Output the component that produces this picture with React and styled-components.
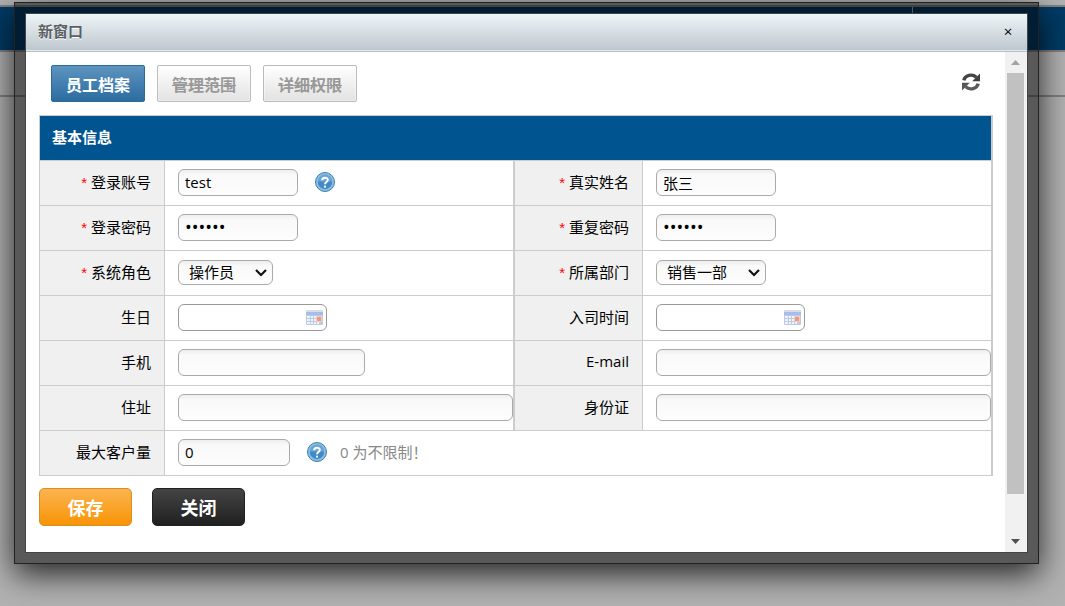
import React from 'react';
import styled, { createGlobalStyle, css } from 'styled-components';

const GlobalStyle = createGlobalStyle`
    * {
        box-sizing: border-box;
    }

    html, body, #root {
        height: 100%;
        margin: 0;
    }

    body {
        overflow: hidden;
        background: #b2b2b2;
        font-family: "Open Sans", "Noto Sans CJK SC", sans-serif;
        font-size: 15px;
        color: #000;
    }

    button, input, select {
        font-family: inherit;
        font-size: inherit;
        color: inherit;
    }
`;

// Page behind the dialog
const Page = styled.div`
    position: relative;
    height: 100%;
`;

const TopLine = styled.div`
    height: 7px;
    border-bottom: 2px solid #818181;
`;

const NavBar = styled.div`
    display: flex;
    justify-content: flex-end;
    height: 45px;
    padding-right: 152px;
    background: #003b66;
    border-bottom: 2px solid #818181;
`;

const NavDivider = styled.div`
    width: 1px;
    background: #b2b2b2;
`;

const SubBar = styled.div`
    height: 45px;
    border-bottom: 2px solid #818181;
`;

// Dialog
const Frame = styled.div`
    position: absolute;
    inset: 2px 26px 42px 14px;
    display: flex;
    padding: 10px;
    border: 1px solid #222;
    background: rgba(0, 0, 0, 0.5);
    box-shadow: 0 10px 30px rgba(0, 0, 0, 0.8);
`;

const Dialog = styled.section`
    display: flex;
    flex-direction: column;
    flex: 1;
    min-width: 0;
    border: 1px solid #444;
    background: #fff;
`;

const TitleBar = styled.header`
    display: flex;
    align-items: center;
    justify-content: space-between;
    height: 38px;
    padding: 0 12px 4px;
    background: linear-gradient(#edf5f8, #bdc6cd);
    border-bottom: 1px solid #b4bec5;
    box-shadow: inset 0 -1px 0 #e2edf1;
`;

const Title = styled.h1`
    margin: 0;
    font-size: 15px;
    font-weight: 700;
    line-height: 20px;
    color: #596164;
    text-shadow: 0 1px 0 #fff;
`;

const CloseButton = styled.button`
    width: 14px;
    padding: 0;
    border: 0;
    background: transparent;
    line-height: 20px;
    color: #000;
`;

const Body = styled.div`
    display: flex;
    flex: 1;
    min-height: 0;
`;

const Content = styled.form`
    flex: 1;
    min-width: 0;
    padding: 13px 12px 0 13px;
`;

const Toolbar = styled.div`
    display: flex;
    align-items: center;
    justify-content: space-between;
    padding: 0 12px;
`;

const Tabs = styled.div`
    display: flex;
    gap: 12px;
`;

const Tab = styled.button`
    height: 37px;
    padding: 0 14px;
    border: 1px solid #bbb;
    border-radius: 2px;
    background: linear-gradient(#fff, #e2e2e2);
    box-shadow: inset 0 0 0 1px rgba(255, 255, 255, 0.4);
    font-size: 16px;
    font-weight: 700;
    color: #999;
    text-decoration: line-through;

    ${(props) => props.$active && css`
        border-color: #2c6a9b;
        background: linear-gradient(#5e94bf, #2b6ca0);
        box-shadow: none;
        color: #fff;
        text-decoration: none;
    `}
`;

const IconButton = styled.button`
    display: flex;
    padding: 0;
    border: 0;
    background: transparent;
`;

const RefreshButton = styled(IconButton)`
    padding-bottom: 4px;
`;

const Table = styled.table`
    width: 100%;
    margin-top: 13px;
    border-collapse: separate;
    border-spacing: 0;
    table-layout: fixed;
    border-top: 1px solid #ccc;
    border-left: 1px solid #ccc;
    border-right: 1px solid #ccc;
`;

const HeadCell = styled.th`
    height: 45px;
    padding: 0 12px 4px;
    border-right: 1px solid #ccc;
    border-bottom: 1px solid #ccc;
    background: #005490;
    text-align: left;
    font-weight: 700;
    color: #fff;
`;

const LabelCell = styled.th`
    height: 45px;
    padding: 0 13px 4px 0;
    border-right: 1px solid #ccc;
    border-bottom: 1px solid #ccc;
    border-left: ${(props) => (props.$second ? '1px solid #ccc' : '0')};
    background: #f0f0f0;
    font-weight: 400;
    text-align: right;
`;

const FieldCell = styled.td`
    height: 45px;
    padding: 0 0 2px 13px;
    border-right: 1px solid #ccc;
    border-bottom: 1px solid #ccc;
`;

const Field = styled.div`
    display: flex;
    align-items: center;
`;

const Star = styled.span`
    margin-right: 4px;
    font-family: "Liberation Sans", sans-serif;
    color: #f00;
`;

const control = css`
    border: 1px solid #aaa;
    border-radius: 6px;
    background: linear-gradient(#eee, #f9f9f9 5px, #fdfdfd);
`;

const Input = styled.input`
    ${control}
    display: block;
    width: ${(props) => props.$width || '100%'};
    height: 27px;
    padding: 0 6px;
    font-size: ${(props) => (props.type === 'password' ? '18px' : '15px')};
`;

const SelectBox = styled.div`
    position: relative;
    width: ${(props) => props.$width};

    svg {
        position: absolute;
        top: 8px;
        right: 5px;
        pointer-events: none;
    }
`;

const Select = styled.select`
    ${control}
    display: block;
    width: 100%;
    height: 25px;
    padding: 0 0 0 10px;
    appearance: none;
`;

const DateBox = styled.div`
    display: flex;
    align-items: center;
    width: 149px;
    height: 27px;
    padding-right: 2px;
    border: 1px solid #999;
    border-radius: 6px;
    background: #fff;
`;

const DateInput = styled.input`
    flex: 1;
    min-width: 0;
    padding: 0 6px;
    border: 0;
    background: transparent;
`;

const HelpButton = styled(IconButton)`
    margin-left: 16px;
`;

const Hint = styled.span`
    margin-left: 12px;
    padding-bottom: 2px;
    color: #888;
`;

const Actions = styled.div`
    display: flex;
    gap: 20px;
    padding-top: 12px;
`;

const Action = styled.button`
    width: 93px;
    height: 38px;
    padding: 0;
    border: 1px solid #222;
    border-radius: 5px;
    background: linear-gradient(#444, #202020);
    font-size: 18px;
    font-weight: 700;
    color: #fff;

    ${(props) => props.$primary && css`
        border-color: #dc8d1f;
        background: linear-gradient(#fbb450, #f89406);
    `}
`;

const Scrollbar = styled.div`
    display: flex;
    flex-direction: column;
    align-items: center;
    width: 22px;
    padding-right: 1px;
    background: #f1f1f1;
`;

const ScrollArrow = styled.button`
    display: flex;
    align-items: center;
    justify-content: center;
    width: 17px;
    height: 21px;
    padding: 0;
    border: 0;
    background: transparent;
`;

const ScrollTrack = styled.div`
    flex: 1;
    width: 17px;
`;

const ScrollThumb = styled.div`
    height: 92%;
    background: #c1c1c1;
`;

function RefreshIcon() {
    return (
        <svg width="20" height="20" viewBox="0 0 20 20">
            <path d="M2.8 8.4C4 3.2 11 1.4 15.4 5.2" fill="none" stroke="#454545" strokeWidth="3.4" />
            <path d="M19 1.6V9.2H11.2Z" fill="#404040" />
            <path d="M17.2 11.6C16 16.8 9 18.6 4.6 14.8" fill="none" stroke="#5a5a5a" strokeWidth="3.4" />
            <path d="M1 18.4V10.8H8.8Z" fill="#555" />
        </svg>
    );
}

function HelpIcon() {
    return (
        <svg width="22" height="22" viewBox="0 0 22 22">
            <circle cx="11" cy="11" r="9.5" fill="#8cc0e4" stroke="#3f7fa8" />
            <circle cx="11" cy="11" r="7.2" fill="#4289c6" />
            <path d="M3.8 10.6a7.2 7.2 0 0 1 14.4 0Z" fill="#69a6d8" />
            <path d="M8.2 9.2C8.2 5.8 13.8 6 13.8 8.9C13.8 11 11 11 11 13.2" fill="none" stroke="#fff" strokeWidth="2" />
            <circle cx="11" cy="15.7" r="1.1" fill="#fff" />
        </svg>
    );
}

function CalendarIcon() {
    return (
        <svg width="19" height="17" viewBox="0 0 19 17">
            <rect x="1" y="1" width="17" height="15" rx="1" fill="#bccae2" />
            <rect x="1" y="1" width="17" height="2" fill="#d8dce6" />
            <rect x="1" y="3" width="17" height="3" fill="#a6bdec" />
            <path d="M2 7h3v2H2zM6 7h2v2H6zM9 7h2v2H9zM15 7h2v2h-2zM2 10h3v2H2zM6 10h2v2H6zM9 10h2v2H9zM15 10h2v2h-2zM2 13h3v2H2zM6 13h2v2H6zM9 13h2v2H9zM12 13h2v2h-2z" fill="#eff4fc" />
            <rect x="11" y="7" width="6" height="6" rx="1" fill="#f3cdc4" />
            <rect x="12" y="8" width="4" height="4" fill="#ec9a84" />
        </svg>
    );
}

function Label({ id, text, required, second }) {
    return (
        <LabelCell scope="row" $second={second}>
            {required && <Star>*</Star>}
            <label htmlFor={id}>{text}</label>
        </LabelCell>
    );
}

function SelectField({ id, value, width }) {
    return (
        <SelectBox $width={width}>
            <Select id={id}><option>{value}</option></Select>
            <svg width="14" height="10" viewBox="0 0 14 10">
                <path d="M2 2L7 7L12 2" fill="none" stroke="#111" strokeWidth="2.2" />
            </svg>
        </SelectBox>
    );
}

function DateField({ id }) {
    return (
        <DateBox>
            <DateInput id={id} type="text" />
            <CalendarIcon />
        </DateBox>
    );
}

export default function App() {
    return (
        <>
            <GlobalStyle />
            <Page>
                <TopLine />
                <NavBar><NavDivider /></NavBar>
                <SubBar />
                <Frame>
                    <Dialog role="dialog" aria-labelledby="title">
                        <TitleBar>
                            <Title id="title">新窗口</Title>
                            <CloseButton type="button">×</CloseButton>
                        </TitleBar>
                        <Body>
                            <Content onSubmit={(e) => e.preventDefault()}>
                                <Toolbar>
                                    <Tabs>
                                        <Tab type="button" $active>员工档案</Tab>
                                        <Tab type="button">管理范围</Tab>
                                        <Tab type="button">详细权限</Tab>
                                    </Tabs>
                                    <RefreshButton type="button"><RefreshIcon /></RefreshButton>
                                </Toolbar>
                                <Table>
                                    <colgroup>
                                        <col width="125" />
                                        <col />
                                        <col width="129" />
                                        <col />
                                    </colgroup>
                                    <thead>
                                        <tr><HeadCell colSpan={4}>基本信息</HeadCell></tr>
                                    </thead>
                                    <tbody>
                                        <tr>
                                            <Label id="account" text="登录账号" required />
                                            <FieldCell>
                                                <Field>
                                                    <Input id="account" type="text" defaultValue="test" $width="120px" />
                                                    <HelpButton type="button"><HelpIcon /></HelpButton>
                                                </Field>
                                            </FieldCell>
                                            <Label id="name" text="真实姓名" required second />
                                            <FieldCell><Input id="name" type="text" defaultValue="张三" $width="120px" /></FieldCell>
                                        </tr>
                                        <tr>
                                            <Label id="password" text="登录密码" required />
                                            <FieldCell><Input id="password" type="password" defaultValue="123456" $width="120px" /></FieldCell>
                                            <Label id="repeat" text="重复密码" required second />
                                            <FieldCell><Input id="repeat" type="password" defaultValue="123456" $width="120px" /></FieldCell>
                                        </tr>
                                        <tr>
                                            <Label id="role" text="系统角色" required />
                                            <FieldCell><SelectField id="role" value="操作员" width="95px" /></FieldCell>
                                            <Label id="department" text="所属部门" required second />
                                            <FieldCell><SelectField id="department" value="销售一部" width="110px" /></FieldCell>
                                        </tr>
                                        <tr>
                                            <Label id="birthday" text="生日" />
                                            <FieldCell><DateField id="birthday" /></FieldCell>
                                            <Label id="joined" text="入司时间" second />
                                            <FieldCell><DateField id="joined" /></FieldCell>
                                        </tr>
                                        <tr>
                                            <Label id="mobile" text="手机" />
                                            <FieldCell><Input id="mobile" type="text" $width="187px" /></FieldCell>
                                            <Label id="email" text="E-mail" second />
                                            <FieldCell><Input id="email" type="text" /></FieldCell>
                                        </tr>
                                        <tr>
                                            <Label id="address" text="住址" />
                                            <FieldCell><Input id="address" type="text" /></FieldCell>
                                            <Label id="idcard" text="身份证" second />
                                            <FieldCell><Input id="idcard" type="text" /></FieldCell>
                                        </tr>
                                        <tr>
                                            <Label id="limit" text="最大客户量" />
                                            <FieldCell colSpan={3}>
                                                <Field>
                                                    <Input id="limit" type="text" defaultValue="0" $width="112px" />
                                                    <HelpButton type="button"><HelpIcon /></HelpButton>
                                                    <Hint>0 为不限制！</Hint>
                                                </Field>
                                            </FieldCell>
                                        </tr>
                                    </tbody>
                                </Table>
                                <Actions>
                                    <Action type="submit" $primary>保存</Action>
                                    <Action type="button">关闭</Action>
                                </Actions>
                            </Content>
                            <Scrollbar>
                                <ScrollArrow type="button">
                                    <svg width="9" height="5" viewBox="0 0 9 5"><path d="M0 5L4.5 0L9 5Z" fill="#a3a3a3" /></svg>
                                </ScrollArrow>
                                <ScrollTrack><ScrollThumb /></ScrollTrack>
                                <ScrollArrow type="button">
                                    <svg width="9" height="5" viewBox="0 0 9 5"><path d="M0 0L4.5 5L9 0Z" fill="#505050" /></svg>
                                </ScrollArrow>
                            </Scrollbar>
                        </Body>
                    </Dialog>
                </Frame>
            </Page>
        </>
    );
}
